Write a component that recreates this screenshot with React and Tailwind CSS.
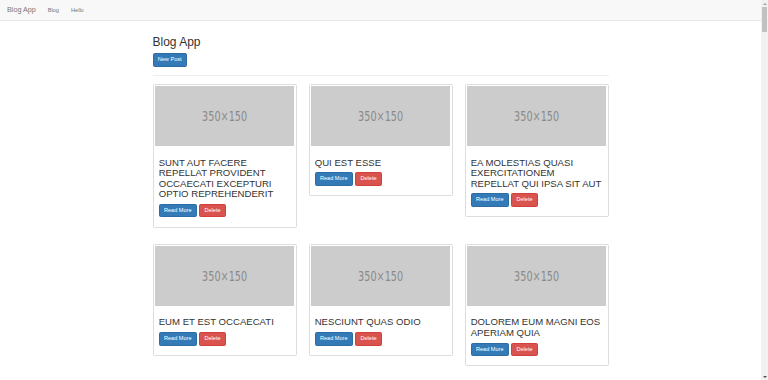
import React from 'react';

const posts = [
    [
        'sunt aut facere repellat provident occaecati excepturi optio reprehenderit',
        'qui est esse',
        'ea molestias quasi exercitationem repellat qui ipsa sit aut',
    ],
    ['eum et est occaecati', 'nesciunt quas odio', 'dolorem eum magni eos aperiam quia'],
];

const Btn = ({ children, danger }) => (
    <button
        className={
            danger
                ? 'h-[13.6px] px-[4.2px] flex items-center rounded-[1.6px] border border-[#d43f3a] bg-[#d9534f] text-white text-[5.6px] leading-none'
                : 'h-[13.6px] px-[4.2px] flex items-center rounded-[1.6px] border border-[#2e6da4] bg-[#337ab7] text-white text-[5.6px] leading-none'
        }
    >
        {children}
    </button>
);

const PostCard = ({ title }) => (
    <div className="border border-[#ddd] rounded-[1.6px] p-[1.6px] bg-white">
        <div className="h-[59.6px] bg-[#ccc] flex items-center justify-center">
            <span className="inline-block scale-x-[0.69] font-['DejaVu_Sans',sans-serif] text-[14px] text-[#8a8a8a]">
                350×150
            </span>
        </div>
        <div className="p-[3.6px]">
            <h3 className="mt-[8px] mb-[4px] text-[9.6px] leading-[10.56px] uppercase text-[#333]">{title}</h3>
            <div className="flex gap-[2.5px] mb-[4px]">
                <Btn>Read More</Btn>
                <Btn danger>Delete</Btn>
            </div>
        </div>
    </div>
);

const Scrollbar = () => (
    <div className="w-[7px] bg-[#f1f1f1] flex flex-col items-center">
        <div className="h-[7px] flex items-center justify-center">
            <div className="w-0 h-0 border-l-[2px] border-r-[2px] border-b-[2px] border-l-transparent border-r-transparent border-b-[#a3a3a3]" />
        </div>
        <div className="w-[5px] h-[25px] bg-[#c1c1c1]" />
        <div className="flex-1" />
        <div className="h-[7px] flex items-center justify-center">
            <div className="w-0 h-0 border-l-[2px] border-r-[2px] border-t-[2px] border-l-transparent border-r-transparent border-t-[#505050]" />
        </div>
    </div>
);

export default function App() {
    return (
        <div className="flex h-[380px] overflow-hidden bg-white text-[#333] font-['Liberation_Sans',Arial,sans-serif]">
            <div className="flex-1 min-w-0">
                <nav className="h-[21px] border-b border-[#e7e7e7] bg-[#f8f8f8] flex items-center text-[#777]">
                    <span className="pl-[7px] pr-[6px] text-[7.2px]">Blog App</span>
                    <span className="px-[6px] text-[5.6px]">Blog</span>
                    <span className="px-[6px] text-[5.6px]">Hello</span>
                </nav>

                <main className="w-[456px] mx-auto pt-[15px]">
                    <h2 className="text-[12px] leading-[13.2px] mb-[4px]">Blog App</h2>
                    <div className="flex">
                        <Btn>New Post</Btn>
                    </div>
                    <hr className="my-[8px] border-t border-[#eee]" />

                    <div className="flex flex-col gap-[16px]">
                        {posts.map((row, i) => (
                            <div key={i} className="grid grid-cols-3 gap-x-[12px] items-start">
                                {row.map((t) => (
                                    <PostCard key={t} title={t} />
                                ))}
                            </div>
                        ))}
                    </div>
                </main>
            </div>
            <Scrollbar />
        </div>
    );
}
